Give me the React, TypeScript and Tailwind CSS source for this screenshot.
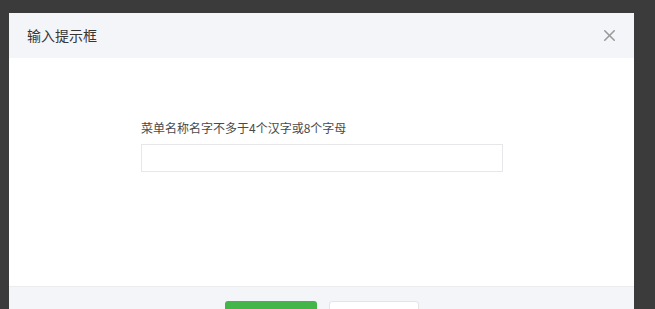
import { X } from "lucide-react";

const font = { fontFamily: '"Noto Sans CJK SC", "Noto Sans", sans-serif' };

export default function App() {
  return (
    <div className="h-[309px] w-[655px] overflow-hidden bg-[#3b3b3b] pl-[9px] pt-[13px]" style={font}>
      <div className="w-[625px] bg-white">
        {/* header */}
        <div className="flex h-[45px] items-center justify-between bg-[#f4f5f9] pl-[18px] pr-[15px]">
          <span className="text-[14px] text-[#353535]">输入提示框</span>
          <X className="h-[19px] w-[19px] text-[#9a9a9a]" strokeWidth={2} />
        </div>

        {/* body */}
        <div className="flex h-[228px] flex-col pl-[132px] pt-[62px]">
          <label className="text-[12px] leading-[16px] text-[#4a4a4a]">菜单名称名字不多于4个汉字或8个字母</label>
          <input className="mt-[8px] h-[28px] w-[362px] border border-[#e7e7eb] bg-white outline-none" />
        </div>

        {/* footer */}
        <div className="flex h-[60px] justify-center gap-[12px] border-t border-[#ececf0] bg-[#f4f5f9] pt-[14px]">
          <button className="h-[30px] w-[92px] rounded-[3px] bg-[#44b549] text-[13px] text-white">确定</button>
          <button className="h-[30px] w-[90px] rounded-[3px] border border-[#e4e4e4] bg-white text-[13px] text-[#353535]">取消</button>
        </div>
      </div>
    </div>
  );
}
